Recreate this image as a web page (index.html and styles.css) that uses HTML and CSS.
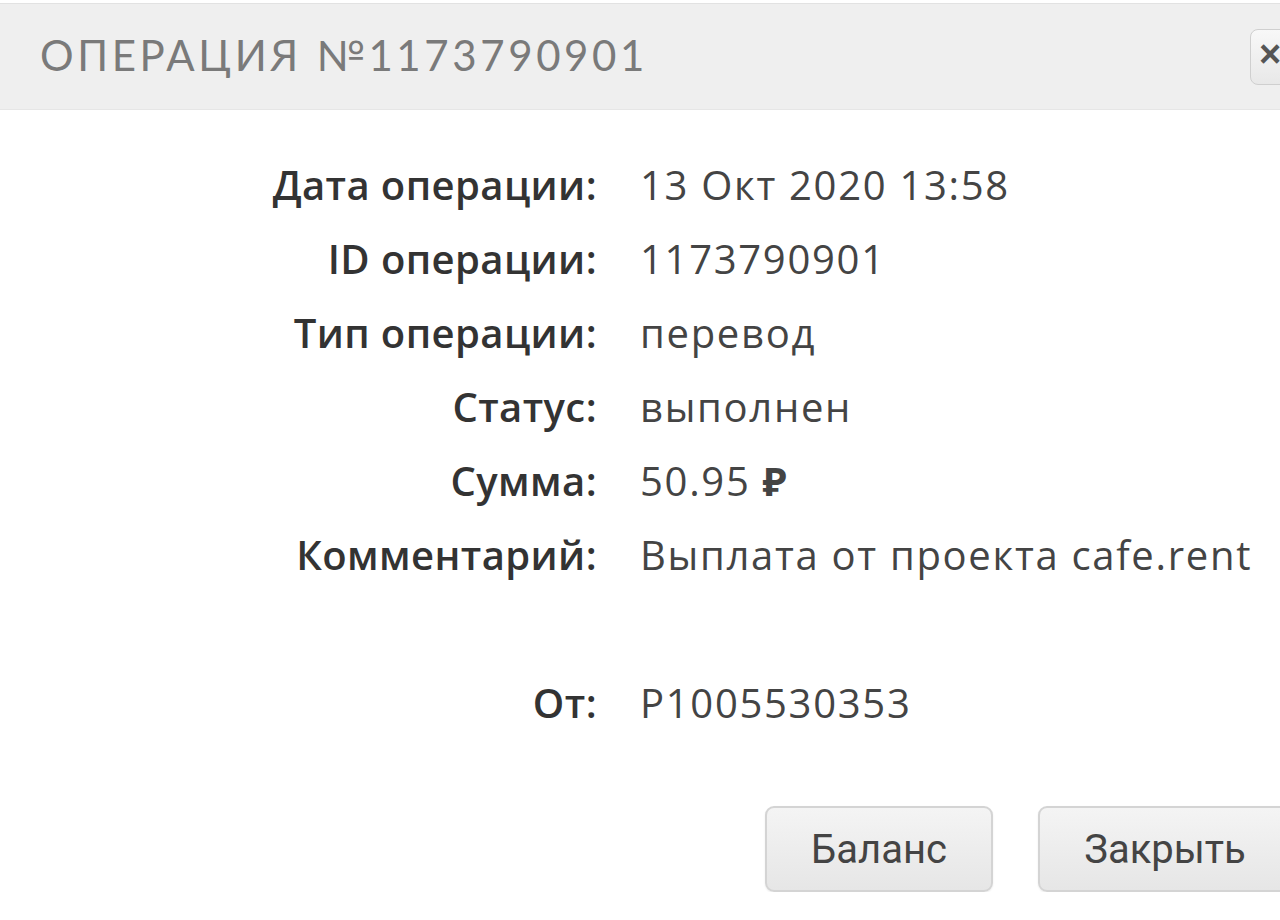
FILE: index.html
```html
<!DOCTYPE html>
<html>
<head>
    <meta charset="utf-8">
    <title>Операция №1173790901</title>
    <link rel="stylesheet" href="styles.css">
</head>
<body>
    <div class="modal">
        <header class="modal-header">
            <h1>Операция №1173790901</h1>
            <button class="close" type="button">×</button>
        </header>

        <div class="details">
            <div class="label">Дата операции:</div>
            <div class="value">13 Окт 2020 13:58</div>

            <div class="label">ID операции:</div>
            <div class="value">1173790901</div>

            <div class="label">Тип операции:</div>
            <div class="value">перевод</div>

            <div class="label">Статус:</div>
            <div class="value">выполнен</div>

            <div class="label">Сумма:</div>
            <div class="value">50.95 <span class="rub">₽</span></div>

            <div class="label">Комментарий:</div>
            <div class="value">Выплата от проекта cafe.rent</div>

            <div class="label"></div>
            <div class="value"></div>

            <div class="label">От:</div>
            <div class="value">P1005530353</div>
        </div>

        <div class="modal-footer">
            <button type="button" class="btn btn-balance">Баланс</button>
            <button type="button" class="btn btn-close">Закрыть</button>
        </div>
    </div>
</body>
</html>
```

FILE: styles.css
```css
html, body {
    margin: 0;
    padding: 0;
    background-color: #ffffff;
    overflow: hidden;
}

body {
    font-family: "Open Sans", "Noto Sans", sans-serif;
    color: #333333;
}

.modal {
    width: 1310px;
}

.modal-header {
    display: flex;
    align-items: center;
    justify-content: space-between;
    height: 105px;
    margin-top: 3px;
    padding: 0 0 0 40px;
    background-color: #efefef;
    border-top: 1px solid #e2e2e2;
    border-bottom: 1px solid #e6e6e6;
}

.modal-header h1 {
    margin: 0 0 4px 0;
    font-family: "Lato", sans-serif;
    font-weight: normal;
    font-size: 42px;
    letter-spacing: 3.6px;
    text-transform: uppercase;
    color: #7a7a7a;
}

.close {
    width: 58px;
    height: 56px;
    margin-right: 2px;
    border: 1px solid #cfcfcf;
    border-radius: 8px;
    background: linear-gradient(#f8f8f8, #e8e8e8);
    font-family: "Liberation Sans", sans-serif;
    font-size: 38px;
    font-weight: bold;
    color: #555555;
    text-align: left;
    padding: 0 0 4px 8px;
}

.details {
    display: grid;
    grid-template-columns: 597px 1fr;
    column-gap: 43px;
    padding-top: 38px;
    font-size: 40px;
    line-height: 74px;
}

.label {
    text-align: right;
    font-weight: 600;
    letter-spacing: 0.4px;
    color: #333333;
    min-height: 74px;
}

.value {
    color: #444444;
    letter-spacing: 1.7px;
    white-space: nowrap;
    min-height: 74px;
}

.rub {
    font-weight: bold;
}

.modal-footer {
    display: flex;
    justify-content: flex-end;
    gap: 45px;
    padding: 66px 18px 0 0;
}

.btn {
    height: 86px;
    border: 2px solid #d4d4d4;
    border-radius: 9px;
    background: linear-gradient(#f4f4f4, #e6e6e6);
    font-family: "Roboto", sans-serif;
    font-size: 40px;
    color: #444444;
    box-shadow: 0 1px 2px rgba(0, 0, 0, 0.08);
}

.btn-balance {
    width: 228px;
}

.btn-close {
    width: 254px;
}
```
